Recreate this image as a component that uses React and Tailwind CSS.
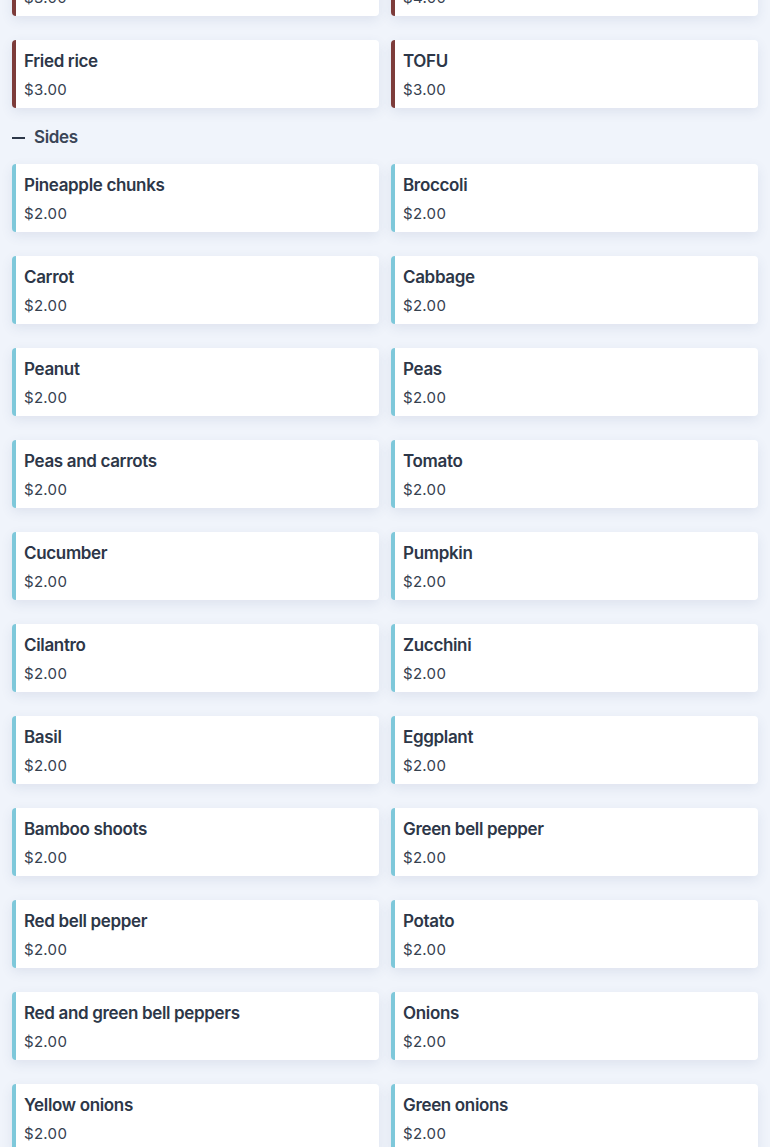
const mains = [
  { name: "Steamed rice", price: "$3.00" },
  { name: "Noodles", price: "$4.00" },
  { name: "Fried rice", price: "$3.00" },
  { name: "TOFU", price: "$3.00" },
];

const sides = [
  "Pineapple chunks", "Broccoli",
  "Carrot", "Cabbage",
  "Peanut", "Peas",
  "Peas and carrots", "Tomato",
  "Cucumber", "Pumpkin",
  "Cilantro", "Zucchini",
  "Basil", "Eggplant",
  "Bamboo shoots", "Green bell pepper",
  "Red bell pepper", "Potato",
  "Red and green bell peppers", "Onions",
  "Yellow onions", "Green onions",
].map(name => ({ name, price: "$2.00" }));

function Card({ item, accent }) {
  return (
    <div className={`h-[68px] bg-white rounded border-l-4 ${accent} pl-2 pt-[9px] flex flex-col shadow-[0_4px_12px_rgba(60,80,130,0.10)]`}>
      <span className="text-[17px] leading-6 font-semibold tracking-[-0.02em] text-[#2d3748]">{item.name}</span>
      <span className="mt-[7px] text-[15px] leading-5 tracking-[0.02em] text-[#36414f]">{item.price}</span>
    </div>
  );
}

export default function App() {
  return (
    <div className="min-h-screen bg-[#f0f4fb] px-3 overflow-hidden" style={{ fontFamily: "Inter, 'Noto Sans', sans-serif" }}>
      <div className="grid grid-cols-2 gap-x-3 gap-y-6 -mt-[52px]">
        {mains.map(m => <Card key={m.name} item={m} accent="border-[#7d3c3a]" />)}
      </div>

      {/* Sides header */}
      <div className="h-14 pt-1 flex items-center gap-[9px]">
        <span className="w-[13px] h-[2px] bg-[#2d3748]" />
        <span className="text-[17px] font-semibold tracking-[-0.02em] text-[#3a4556]">Sides</span>
      </div>

      <div className="grid grid-cols-2 gap-x-3 gap-y-6 pb-6">
        {sides.map(s => <Card key={s.name} item={s} accent="border-[#7ec8da]" />)}
      </div>
    </div>
  );
}
